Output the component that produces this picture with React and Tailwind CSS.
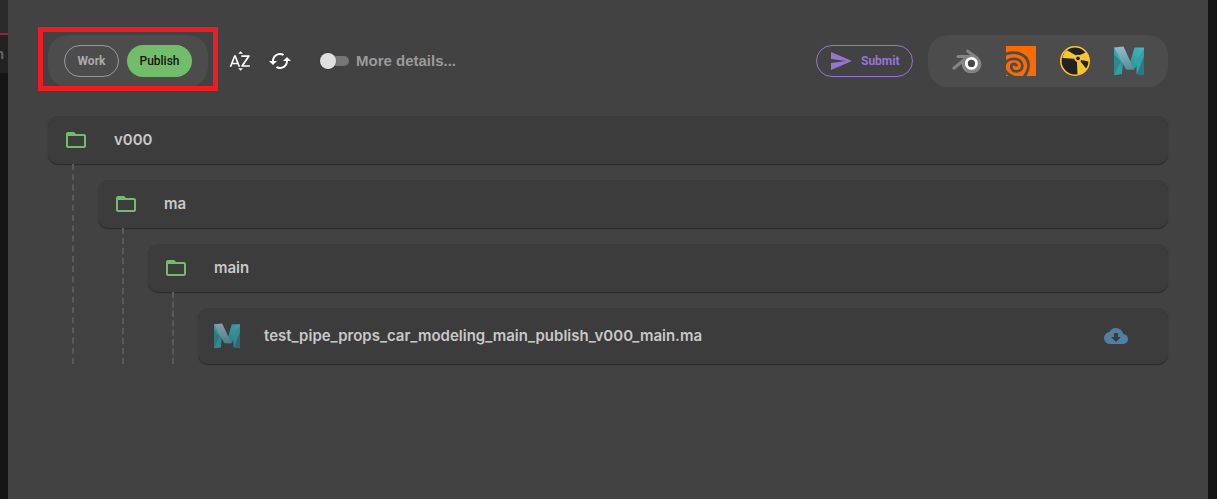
import { MdSend, MdFolderOpen, MdCloudDownload, MdSortByAlpha, MdCached } from "react-icons/md";

function BlenderLogo() {
  return (
    <svg viewBox="0 0 30 30" className="size-[30px]" aria-hidden="true">
      <g stroke="#848484" strokeLinecap="round" strokeLinejoin="round" fill="none">
        <path d="M2 22 L14 12.5" strokeWidth="3.2" />
        <path d="M6 10.5 H16" strokeWidth="3" />
        <path d="M15.5 5 L25 12" strokeWidth="2.8" />
      </g>
      <path d="M13 9.5 L21 8.8 Q29.5 12 29.5 18.5 Q28.5 27 19.5 27.3 Q10.5 27 9.8 18.5 L9 16 Z" fill="#848484" />
      <circle cx="19.4" cy="17.4" r="5" fill="#484848" stroke="#fff" strokeWidth="2.8" />
    </svg>
  );
}

function HoudiniLogo() {
  return (
    <svg viewBox="0 0 30 30" className="size-[30px]" aria-hidden="true">
      <path d="M0 0H30V30H0Z" fill="#ff6a00" />
      <path
        d="M-2 9 C7 4 22 7 22.5 19 C22.7 23 21 27 18 31 M-1 18 C2 11 16.3 11 16.3 19.8 C16.3 27.3 5.2 27 5.2 20.8 C5.2 17.2 10.6 17 10.6 20.6 M-1 24 C0.5 28 4 29.5 8 31"
        fill="none"
        stroke="#4c4c4c"
        strokeWidth="2.8"
      />
    </svg>
  );
}

function NukeLogo() {
  return (
    <svg viewBox="0 0 30 30" className="size-[30px]" aria-hidden="true">
      <circle cx="15" cy="15" r="14.2" fill="#222" stroke="#fbc62f" strokeWidth="1.6" />
      <path d="M18 13 L2.5 12 Q3 7 7 4.2 L16 9.5Z" fill="#fbc62f" />
      <path d="M18 12.5 L19 9.5 L26.5 6 Q29.5 10 29 15.5 L21 14Z" fill="#fbc62f" />
      <path d="M18 12.5 L20.5 15.5 L26.5 23 Q23 27.5 17.5 28.5 L17 16Z" fill="#fbc62f" />
      <circle cx="18" cy="12.3" r="3.6" fill="#fbc62f" />
      <circle cx="18" cy="12.3" r="1.9" fill="#222" />
    </svg>
  );
}

function MayaLogo({ className }) {
  return (
    <svg viewBox="0 0 30 30" className={className} aria-hidden="true">
      <defs>
        <linearGradient id="maya-band" x1="0" y1="0" x2="0" y2="1">
          <stop offset="0" stopColor="#93bcc6" />
          <stop offset="1" stopColor="#568f99" />
        </linearGradient>
        <linearGradient id="maya-right" x1="1" y1="0" x2="0" y2="1">
          <stop offset="0" stopColor="#42bcc0" />
          <stop offset="1" stopColor="#2b8b92" />
        </linearGradient>
      </defs>
      <path d="M0 1.5 L9 15 L8 28 L0 29Z" fill="#36a8ad" />
      <path d="M0 8 L8 17 L7.5 25 L0 29Z" fill="#2b8991" />
      <path d="M0 29 L7 15 L7.5 28Z" fill="#379da3" />
      <path d="M20.5 1.5 H30 V10 L20 23.5 H14Z" fill="url(#maya-right)" />
      <path d="M30 3 V29 L22.5 28 V15Z" fill="#34a1a6" />
      <path d="M30 10 L23 28 L30 29Z" fill="#277984" />
      <path d="M0 1.5 L9.5 .5 L20 23.5 H12Z" fill="url(#maya-band)" />
    </svg>
  );
}

const tree = {
  name: "v000",
  children: [
    {
      name: "ma",
      children: [
        { name: "main", children: [{ name: "test_pipe_props_car_modeling_main_publish_v000_main.ma" }] },
      ],
    },
  ],
};

const card =
  "flex items-center rounded-[10px] bg-[#3c3c3c] pr-10 shadow-[0_1px_1px_#2a2a2a] text-[15px] font-semibold text-[#c8c8c8] font-['Inter','Liberation_Sans',sans-serif]";

function TreeNode({ node }) {
  if (!node.children) {
    return (
      <li className={`${card} h-14 pl-4`}>
        <MayaLogo className="mr-6 size-[26px] opacity-80" />
        <span className="grow">{node.name}</span>
        <button type="button" aria-label={`Download ${node.name}`} className="text-[#5080a0]">
          <MdCloudDownload className="size-6" />
        </button>
      </li>
    );
  }
  return (
    <li>
      <div className={`${card} h-12 pl-4`}>
        <MdFolderOpen className="mr-[26px] size-6 text-[#71bd69]" />
        <span>{node.name}</span>
      </div>
      <ul className="ml-6 border-l-2 border-dashed border-[#5a5a5a] pt-4 pl-6">
        {node.children.map((child) => (
          <TreeNode key={child.name} node={child} />
        ))}
      </ul>
    </li>
  );
}

const apps = [
  ["Blender", <BlenderLogo />],
  ["Houdini", <HoudiniLogo />],
  ["Nuke", <NukeLogo />],
  ["Maya", <MayaLogo className="size-[30px]" />],
];

export default function App() {
  return (
    <div className="flex min-h-screen bg-[#141414] font-['Liberation_Sans',sans-serif]">
      <aside className="w-2 shrink-0 overflow-hidden">
        <div className="h-[33px] bg-[#2b2b2b]" />
        <div className="flex h-10 items-center justify-end border-t-2 border-[#8b2c2e] bg-[#222] pr-1 text-sm font-semibold text-[#666]">
          n
        </div>
      </aside>
      <main className="min-w-0 grow bg-[#424242] px-10 pt-[35px]">
        <header className="flex h-[52px] items-center">
          <div className="relative flex h-[52px] items-center gap-2 rounded-[20px] bg-[#4c4c4c] px-4 text-xs font-['Roboto',sans-serif]">
            <button type="button" className="h-8 min-w-[55px] rounded-full border border-[#999] px-3 font-bold text-[#aaa]">
              Work
            </button>
            <button type="button" className="h-8 min-w-[65px] rounded-full bg-[#71bd69] px-3 font-medium text-[#161616]">
              Publish
            </button>
            <span className="pointer-events-none absolute -inset-x-[10px] -top-2 -bottom-1 border-[5px] border-[#ee1c25]" />
          </div>
          <button type="button" aria-label="Sort alphabetically" className="ml-5 text-white">
            <MdSortByAlpha className="size-6" />
          </button>
          <button type="button" aria-label="Refresh" className="ml-4 text-white">
            <MdCached className="size-6" />
          </button>
          <label className="ml-7 flex items-center text-[15px] font-bold text-[#9b9b9b]">
            <input type="checkbox" role="switch" className="peer sr-only" />
            <span className="mr-[7px] flex h-[10px] w-[29px] items-center rounded-full bg-[linear-gradient(90deg,transparent_3px,#767676_3px)]">
              <span className="size-4 shrink-0 rounded-full bg-[#e0e0e0] shadow-sm" />
            </span>
            More details...
          </label>
          <button
            type="button"
            className="ml-auto flex h-8 min-w-[97px] items-center gap-2 rounded-full border border-[#9575cd] px-3 text-xs font-bold text-[#9575cd] font-['Roboto',sans-serif]"
          >
            <MdSend className="size-6" />
            Submit
          </button>
          <div className="ml-[15px] flex h-[52px] items-center gap-6 rounded-[20px] bg-[#4c4c4c] px-6">
            {apps.map(([name, logo]) => (
              <button key={name} type="button" aria-label={name}>
                {logo}
              </button>
            ))}
          </div>
        </header>
        <ul className="pt-[29px] pb-10">
          <TreeNode node={tree} />
        </ul>
      </main>
      <div className="w-[9px] shrink-0" />
    </div>
  );
}
